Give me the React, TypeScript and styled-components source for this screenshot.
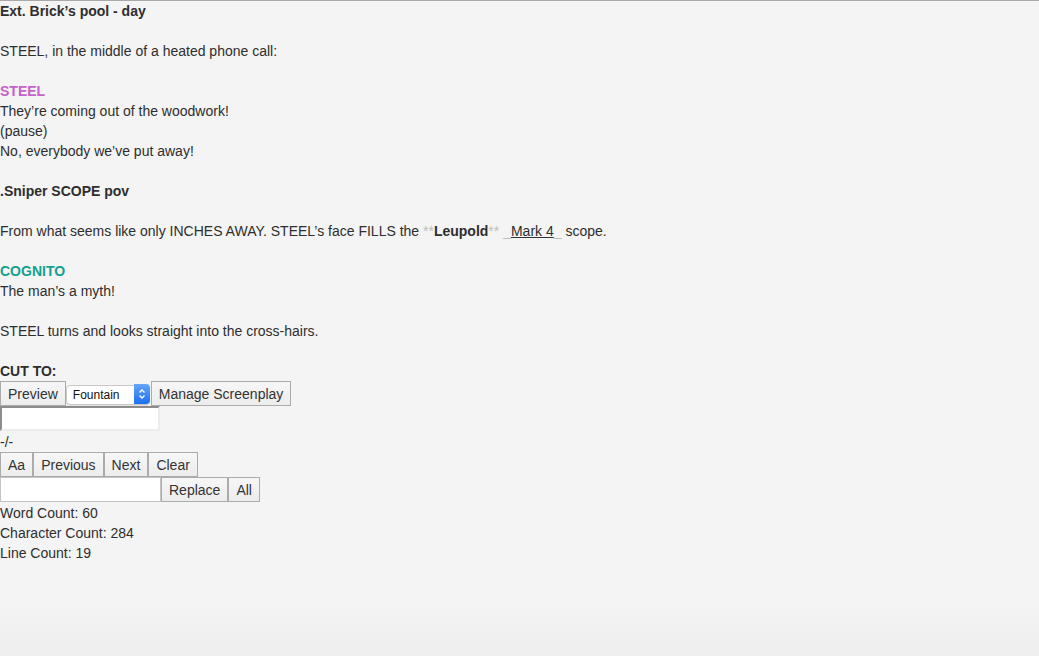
import React from "react";
import styled, { createGlobalStyle } from "styled-components";

const Global = createGlobalStyle`
  html, body { margin: 0; padding: 0; }
  body {
    background: #f4f4f4;
    font-family: "Liberation Sans", Arial, sans-serif;
    font-size: 14px;
    line-height: 20px;
    color: #2e2e2e;
  }
`;

const Page = styled.div`
  min-height: 656px;
  box-sizing: border-box;
  border-top: 1px solid #a9a9a9;
  background: linear-gradient(to bottom, #f4f4f4 0, #f4f4f4 600px, #eeeeee 656px);
`;

const Script = styled.div`
  display: flex;
  flex-direction: column;
`;

const Para = styled.div<{ $last?: boolean }>`
  margin-bottom: ${(p) => (p.$last ? "0" : "20px")};
`;

const Heading = styled.div`
  font-weight: bold;
`;

const Character = styled.div<{ $color: string }>`
  font-weight: bold;
  color: ${(p) => p.$color};
`;

const Line = styled.div``;

const Divider = styled.div`
  margin-top: 1px;
`;

const Marker = styled.span`
  color: #bdbdbd;
`;

const Strong = styled.b``;

const Under = styled.span`
  text-decoration: underline;
  text-decoration-color: #333;
`;

const Toolbar = styled.div`
  display: flex;
  align-items: center;
`;

const Button = styled.button`
  height: 25px;
  box-sizing: border-box;
  margin: 0;
  padding: 0 7px;
  border: 1px solid #ababab;
  background: linear-gradient(to bottom, #f7f7f7, #ececec);
  font-family: "Liberation Sans", Arial, sans-serif;
  font-size: 14px;
  color: #333;
  line-height: 22px;
`;

const SelectWrap = styled.div`
  position: relative;
  width: 84px;
  height: 20px;
  margin: 0 1px 0 0;
`;

const Select = styled.select`
  appearance: none;
  -webkit-appearance: none;
  width: 100%;
  height: 100%;
  box-sizing: border-box;
  border: 1px solid #c9c9c9;
  border-radius: 4px;
  background: #fff;
  padding: 0 0 0 6px;
  font-family: "Liberation Sans", Arial, sans-serif;
  font-size: 12px;
  color: #111;
  box-shadow: 0 1px 1px rgba(0, 0, 0, 0.08);
`;

const Stepper = styled.div`
  position: absolute;
  top: 0;
  right: 0;
  width: 16px;
  height: 20px;
  border-radius: 0 4px 4px 0;
  background: linear-gradient(to bottom, #65a6fa, #1c6ff0);
  display: flex;
  align-items: center;
  justify-content: center;
  pointer-events: none;
`;

const TextField = styled.input<{ $w: number; $inset?: boolean }>`
  width: ${(p) => p.$w}px;
  height: 25px;
  box-sizing: border-box;
  margin: 0;
  background: #fff;
  font-family: "Liberation Sans", Arial, sans-serif;
  font-size: 14px;
  padding: 0 3px;
  ${(p) =>
    p.$inset
      ? `border-style: solid; border-width: 2px; border-color: #8c8c8c #ececec #ececec #8c8c8c;`
      : `border: 1px solid #c4c4c4;`}
`;

const Stats = styled.div`
  display: flex;
  flex-direction: column;
  margin-top: 1px;
`;

export default function App() {
  return (
    <Page>
      <Global />
      <Script>
        <Para>
          <Heading>Ext. Brick’s pool - day</Heading>
        </Para>
        <Para>
          <Line>STEEL, in the middle of a heated phone call:</Line>
        </Para>
        <Para>
          <Character $color="#c462c9">STEEL</Character>
          <Line>They’re coming out of the woodwork!</Line>
          <Line>(pause)</Line>
          <Line>No, everybody we’ve put away!</Line>
        </Para>
        <Para>
          <Heading>.Sniper SCOPE pov</Heading>
        </Para>
        <Para>
          <Line>
            From what seems like only INCHES AWAY. STEEL’s face FILLS the <Marker>**</Marker>
            <Strong>Leupold</Strong>
            <Marker>**</Marker> <Marker>_</Marker>
            <Under>Mark 4</Under>
            <Marker>_</Marker> scope.
          </Line>
        </Para>
        <Para>
          <Character $color="#14a08f">COGNITO</Character>
          <Line>The man’s a myth!</Line>
        </Para>
        <Para>
          <Line>STEEL turns and looks straight into the cross-hairs.</Line>
        </Para>
        <Para $last>
          <Heading>CUT TO:</Heading>
        </Para>
      </Script>
      <Toolbar>
        <Button>Preview</Button>
        <SelectWrap>
          <Select defaultValue="Fountain">
            <option>Fountain</option>
          </Select>
          <Stepper>
            <svg width="8" height="12" viewBox="0 0 8 12">
              <path d="M1.5 4.5 L4 2 L6.5 4.5 M1.5 7.5 L4 10 L6.5 7.5" stroke="#fff" strokeWidth="1.3" fill="none" />
            </svg>
          </Stepper>
        </SelectWrap>
        <Button>Manage Screenplay</Button>
      </Toolbar>
      <TextField $w={160} $inset />
      <Divider>-/-</Divider>
      <Toolbar>
        <Button>Aa</Button>
        <Button>Previous</Button>
        <Button>Next</Button>
        <Button>Clear</Button>
      </Toolbar>
      <Toolbar>
        <TextField $w={161} />
        <Button>Replace</Button>
        <Button>All</Button>
      </Toolbar>
      <Stats>
        <Line>Word Count: 60</Line>
        <Line>Character Count: 284</Line>
        <Line>Line Count: 19</Line>
      </Stats>
    </Page>
  );
}
